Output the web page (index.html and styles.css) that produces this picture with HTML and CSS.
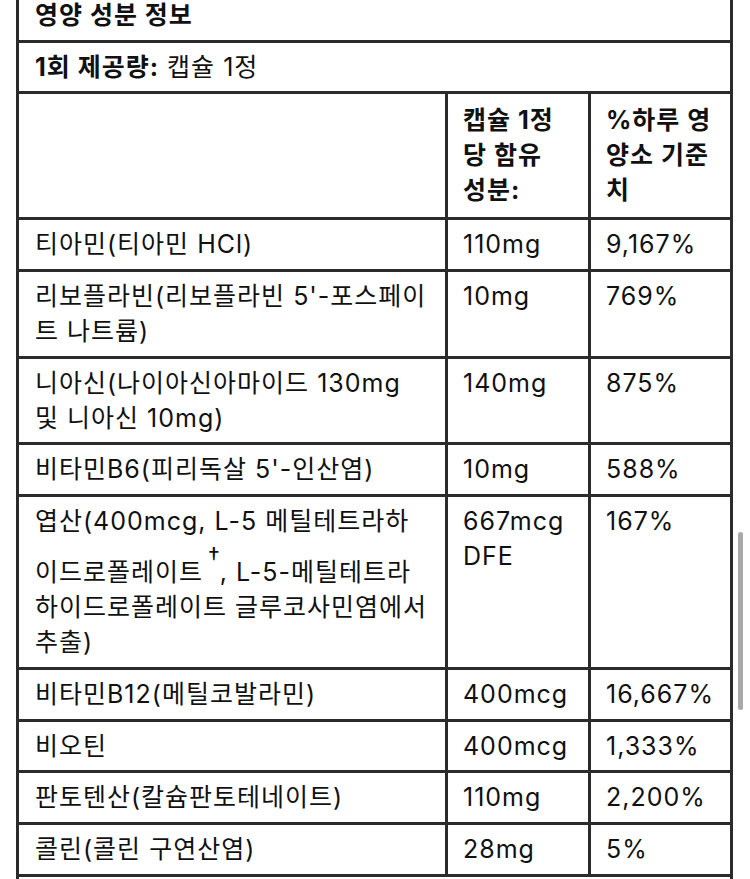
FILE: index.html
```html
<!DOCTYPE html>
<html lang="ko">
<head>
<meta charset="utf-8">
<title>영양 성분 정보</title>
<link rel="stylesheet" href="styles.css">
</head>
<body>
<main class="page">
  <table class="facts">
    <colgroup>
      <col class="col-name">
      <col class="col-amount">
      <col class="col-dv">
    </colgroup>
    <thead>
      <tr><th colspan="3" class="title">영양 성분 정보</th></tr>
      <tr><td colspan="3" class="serving"><b>1회 제공량:</b> 캡슐 1정</td></tr>
      <tr class="head">
        <th></th>
        <th>캡슐 1정 당 함유 성분:</th>
        <th>%하루 영양소 기준치</th>
      </tr>
    </thead>
    <tbody>
      <tr><td>티아민(티아민 HCl)</td><td>110mg</td><td>9,167%</td></tr>
      <tr><td>리보플라빈(리보플라빈 5'-포스페이트 나트륨)</td><td>10mg</td><td>769%</td></tr>
      <tr><td>니아신(나이아신아마이드 130mg 및 니아신 10mg)</td><td>140mg</td><td>875%</td></tr>
      <tr><td>비타민B6(피리독살 5'-인산염)</td><td>10mg</td><td>588%</td></tr>
      <tr><td>엽산(400mcg, L-5 메틸테트라하이드로폴레이트<sup>†</sup>, L-5-메틸테트라하이드로폴레이트 글루코사민염에서 추출)</td><td>667mcg DFE</td><td>167%</td></tr>
      <tr><td>비타민B12(메틸코발라민)</td><td>400mcg</td><td>16,667%</td></tr>
      <tr><td>비오틴</td><td>400mcg</td><td>1,333%</td></tr>
      <tr><td>판토텐산(칼슘판토테네이트)</td><td>110mg</td><td>2,200%</td></tr>
      <tr><td>콜린(콜린 구연산염)</td><td>28mg</td><td>5%</td></tr>
      <tr><td colspan="3" class="note">† 하루 영양소 기준치가 설정되지 않음.</td></tr>
    </tbody>
  </table>
</main>
<div class="scroll-indicator" aria-hidden="true"></div>
</body>
</html>
```

FILE: styles.css
```css
html {
  overflow: hidden;
  background: #ffffff;
}

body {
  margin: 0;
  color: #111111;
  font-family: "Inter", "Noto Sans CJK KR", sans-serif;
  font-size: 25px;
  line-height: 35px;
  letter-spacing: 1px;
  font-feature-settings: "palt";
}

.page {
  padding: 0 17px 0 16px;
}

.facts {
  box-sizing: border-box;
  width: 717px;
  margin-top: -12px;
  table-layout: fixed;
  border-collapse: separate;
  border-spacing: 0;
  border-top: 3px solid #2b2b2b;
  border-left: 3px solid #2b2b2b;
}

.col-amount {
  width: 143px;
}

.col-dv {
  width: 142px;
}

.facts th,
.facts td {
  padding: 7px 15px 6.7px 15px;
  border-right: 3px solid #2b2b2b;
  border-bottom: 3px solid #2b2b2b;
  text-align: left;
  vertical-align: top;
  font-weight: 400;
}

.facts .title,
.facts .head th,
.facts .serving b {
  font-weight: 700;
}

.facts td:first-child,
.facts th:first-child {
  padding-left: 16px;
}

.facts .head th {
  padding-top: 9px;
  padding-right: 18px;
  padding-bottom: 9px;
}

.facts sup {
  font-size: 0.95em;
  vertical-align: 0.68em;
  margin: 0 0 0 5px;
  letter-spacing: 0;
}

.facts .note {
  font-size: 22px;
}

.scroll-indicator {
  position: fixed;
  left: 738px;
  top: 532px;
  width: 5px;
  height: 178px;
  border-radius: 3px;
  background: #a9a9a9;
}
```
